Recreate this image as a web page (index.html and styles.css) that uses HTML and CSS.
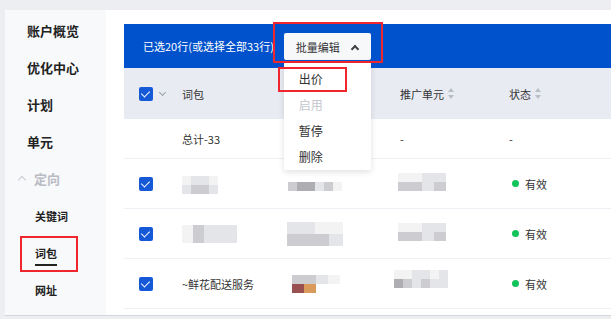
FILE: index.html
```html
<!DOCTYPE html>
<html lang="zh-CN">
<head>
  <meta charset="UTF-8" />
  <title>词包</title>
  <link rel="stylesheet" href="styles.css">
</head>
<body>
  <div class="layout">
    <aside class="sidebar">
      <div class="nav-item">账户概览</div>
      <div class="nav-item">优化中心</div>
      <div class="nav-item">计划</div>
      <div class="nav-item">单元</div>
      <div class="nav-item nav-group"><span class="caret"></span>定向</div>
      <div class="nav-item nav-sub">关键词</div>
      <div class="nav-item nav-sub active"><span>词包</span></div>
      <div class="nav-item nav-sub">网址</div>
      <div class="mark mark-nav"></div>
    </aside>

    <main class="content">
      <div class="batch-bar">
        <span class="batch-text">已选20行(或选择全部33行)</span>
        <div class="batch-menu">
          <button class="batch-btn">批量编辑 <span class="up"></span></button>
          <ul class="dropdown">
            <li>出价</li>
            <li class="disabled">启用</li>
            <li>暂停</li>
            <li>删除</li>
          </ul>
          <div class="mark mark-btn"></div>
          <div class="mark mark-item"></div>
        </div>
      </div>

      <div class="table">
        <div class="row head">
          <div class="cell"><span class="check"></span><span class="down"></span></div>
          <div class="cell">词包</div>
          <div class="cell"></div>
          <div class="cell">推广单元 <span class="sort"></span></div>
          <div class="cell">状态 <span class="sort"></span></div>
        </div>
        <div class="row total">
          <div class="cell"></div>
          <div class="cell">总计-33</div>
          <div class="cell"></div>
          <div class="cell">-</div>
          <div class="cell">-</div>
        </div>
        <div class="row">
          <div class="cell"><span class="check"></span></div>
          <div class="cell"><div class="blur b-a"><i class="s1"></i><i class="s2"></i><i class="s2"></i><i class="s1"></i><i class="s2"></i><i class="s3"></i><i class="s3"></i><i class="s2"></i></div></div>
          <div class="cell"><div class="blur b-b"><i class="s3"></i><i class="s4"></i><i class="s4"></i><i class="s2"></i><i class="s3"></i><i class="s1"></i></div></div>
          <div class="cell"><div class="blur b-c"><i class="s1"></i><i class="s1"></i><i class="s2"></i><i class="s2"></i><i class="s3"></i><i class="s3"></i><i class="s2"></i><i class="s3"></i></div></div>
          <div class="cell"><span class="dot"></span>有效</div>
        </div>
        <div class="row">
          <div class="cell"><span class="check"></span></div>
          <div class="cell"><div class="blur b-d"><i class="s1"></i><i class="s3"></i><i class="s2"></i><i class="s2"></i><i class="s2"></i><i class="s1"></i><i class="s3"></i><i class="s2"></i><i class="s2"></i><i class="s2"></i></div></div>
          <div class="cell"><div class="blur b-e"><i class="s2"></i><i class="s2"></i><i class="s1"></i><i class="s1"></i><i class="s3"></i><i class="s3"></i><i class="s3"></i><i class="s2"></i></div></div>
          <div class="cell"><div class="blur b-c"><i class="s1"></i><i class="s1"></i><i class="s2"></i><i class="s2"></i><i class="s3"></i><i class="s3"></i><i class="s2"></i><i class="s3"></i></div></div>
          <div class="cell"><span class="dot"></span>有效</div>
        </div>
        <div class="row">
          <div class="cell"><span class="check"></span></div>
          <div class="cell">~鲜花配送服务</div>
          <div class="cell"><div class="blur b-f"><i class="s3"></i><i class="s3"></i><i class="s2"></i><i class="s1"></i><i class="red"></i><i class="orange"></i><i class="none"></i><i class="none"></i></div></div>
          <div class="cell"><div class="blur b-g"><i class="s1"></i><i class="s1"></i><i class="s2"></i><i class="s2"></i><i class="s1"></i><i class="s2"></i><i class="s4"></i><i class="s3"></i><i class="s2"></i><i class="s3"></i><i class="s2"></i><i class="s2"></i></div></div>
          <div class="cell"><span class="dot"></span>有效</div>
        </div>
      </div>
    </main>
  </div>
</body>
</html>
```

FILE: styles.css
```css
* {
  box-sizing: border-box;
}

body {
  margin: 0;
  background: #eceef2;
  font-family: "Noto Sans CJK SC", "Liberation Sans", sans-serif;
  color: #333;
  height: 319px;
  overflow: hidden;
}

.layout {
  display: flex;
  margin: 10px 0 0 5px;
  height: 306px;
  border-bottom: 1px solid #d4d6db;
}

.sidebar {
  position: relative;
  width: 101px;
  background: #f8f9fb;
  padding-top: 2px;
}

.nav-item {
  height: 37px;
  display: flex;
  align-items: center;
  padding-left: 22px;
  font-size: 13px;
  font-weight: bold;
  color: #222;
}

.nav-group {
  color: #b9bcc3;
  padding-left: 14px;
}

.caret {
  width: 6px;
  height: 6px;
  border-left: 1px solid #c8cbd1;
  border-top: 1px solid #c8cbd1;
  transform: rotate(45deg);
  margin: 3px 9px 0 0;
}

.nav-sub {
  padding-left: 30px;
  font-size: 11px;
}

.active span {
  border-bottom: 2px solid #222;
  padding-bottom: 3px;
  margin-top: 5px;
}

.content {
  flex: 1;
  background: #fff;
  padding: 14px 0 0 18px;
}

.batch-bar {
  height: 44px;
  background: #0052cc;
  display: flex;
  align-items: center;
  padding-left: 19px;
}

.batch-text {
  color: #fff;
  font-size: 11px;
  white-space: nowrap;
}

.batch-menu {
  position: relative;
  margin-left: 10px;
}

.batch-btn {
  width: 87px;
  height: 27px;
  border: none;
  border-radius: 2px;
  background: #f7f8fa;
  font-family: inherit;
  font-size: 11px;
  color: #333;
  display: flex;
  align-items: center;
  padding-left: 12px;
  margin-top: 1px;
  white-space: nowrap;
}

.up {
  width: 6px;
  height: 6px;
  border-left: 2px solid #444;
  border-top: 2px solid #444;
  transform: rotate(45deg);
  margin: 4px 0 0 12px;
}

.dropdown {
  position: absolute;
  top: 29px;
  left: 0;
  width: 87px;
  margin: 0;
  padding: 5px 0 0;
  list-style: none;
  background: #fff;
  box-shadow: 0 2px 6px rgba(0, 0, 0, 0.12);
  z-index: 2;
}

.dropdown li {
  height: 26px;
  line-height: 26px;
  padding-left: 15px;
  font-size: 12px;
  color: #333;
}

.dropdown .disabled {
  color: #c3c6cc;
}

.mark {
  position: absolute;
  border: 2px solid #f0262e;
  z-index: 3;
}

.mark-btn {
  left: -11px;
  top: -10px;
  width: 110px;
  height: 41px;
}

.mark-item {
  left: -6px;
  top: 35px;
  width: 69px;
  height: 25px;
}

.mark-nav {
  left: 15px;
  top: 226px;
  width: 58px;
  height: 36px;
}

.table {
  font-size: 11px;
}

.row {
  display: grid;
  grid-template-columns: 58px 105px 113px 109px 1fr;
  height: 50px;
  border-bottom: 1px solid #eef0f5;
}

.row.head {
  height: 51px;
  background: #e9ebf3;
  border-bottom: none;
}

.row.total {
  height: 40px;
}

.cell {
  display: flex;
  align-items: center;
  white-space: nowrap;
}

.cell:first-child {
  padding-left: 15px;
}

.check {
  width: 14px;
  height: 14px;
  border-radius: 2px;
  background: #1659d6;
  position: relative;
}

.check::after {
  content: "";
  position: absolute;
  left: 4px;
  top: 2px;
  width: 4px;
  height: 7px;
  border-right: 1.5px solid #fff;
  border-bottom: 1.5px solid #fff;
  transform: rotate(45deg);
}

.down {
  width: 5px;
  height: 5px;
  border-right: 1px solid #9aa0ab;
  border-bottom: 1px solid #9aa0ab;
  transform: rotate(45deg);
  margin: -3px 0 0 7px;
}

.sort {
  display: inline-block;
  width: 7px;
  height: 11px;
  margin-left: 4px;
  position: relative;
}

.sort::before,
.sort::after {
  content: "";
  position: absolute;
  left: 0;
  border-left: 3.5px solid transparent;
  border-right: 3.5px solid transparent;
}

.sort::before {
  top: 0;
  border-bottom: 4px solid #b9bdc7;
}

.sort::after {
  bottom: 0;
  border-top: 4px solid #b9bdc7;
}

.dot {
  width: 7px;
  height: 7px;
  border-radius: 50%;
  background: #12c45a;
  margin: 0 6px 0 3px;
}

.blur {
  display: grid;
}

.blur i {
  display: block;
}

.s1 { background: #f3f3f4; }
.s2 { background: #e4e5e8; }
.s3 { background: #ccccd1; }
.s4 { background: #aeaeb2; }
.red { background: #9a4f50; }
.orange { background: #d99a5c; }
.none { background: transparent; }

.b-a {
  grid-template-columns: repeat(4, 9px);
  grid-template-rows: 9px 9px;
  margin-top: 2px;
}

.b-b {
  grid-template-columns: repeat(6, 9px);
  grid-template-rows: 9px;
  margin-top: 6px;
  margin-left: 1px;
}

.b-c {
  grid-template-columns: repeat(4, 12px);
  grid-template-rows: 9px 9px;
  margin-top: -3px;
  margin-left: -2px;
}

.b-d {
  grid-template-columns: repeat(5, 11px);
  grid-template-rows: 9px 9px;
}

.b-e {
  grid-template-columns: repeat(4, 14px);
  grid-template-rows: 12px 12px;
}

.b-f {
  grid-template-columns: repeat(4, 12px);
  grid-template-rows: 9px 9px;
  margin-left: 5px;
}

.b-g {
  grid-template-columns: repeat(6, 9px);
  grid-template-rows: 9px 9px;
  margin-top: -10px;
  margin-left: -6px;
}
```
